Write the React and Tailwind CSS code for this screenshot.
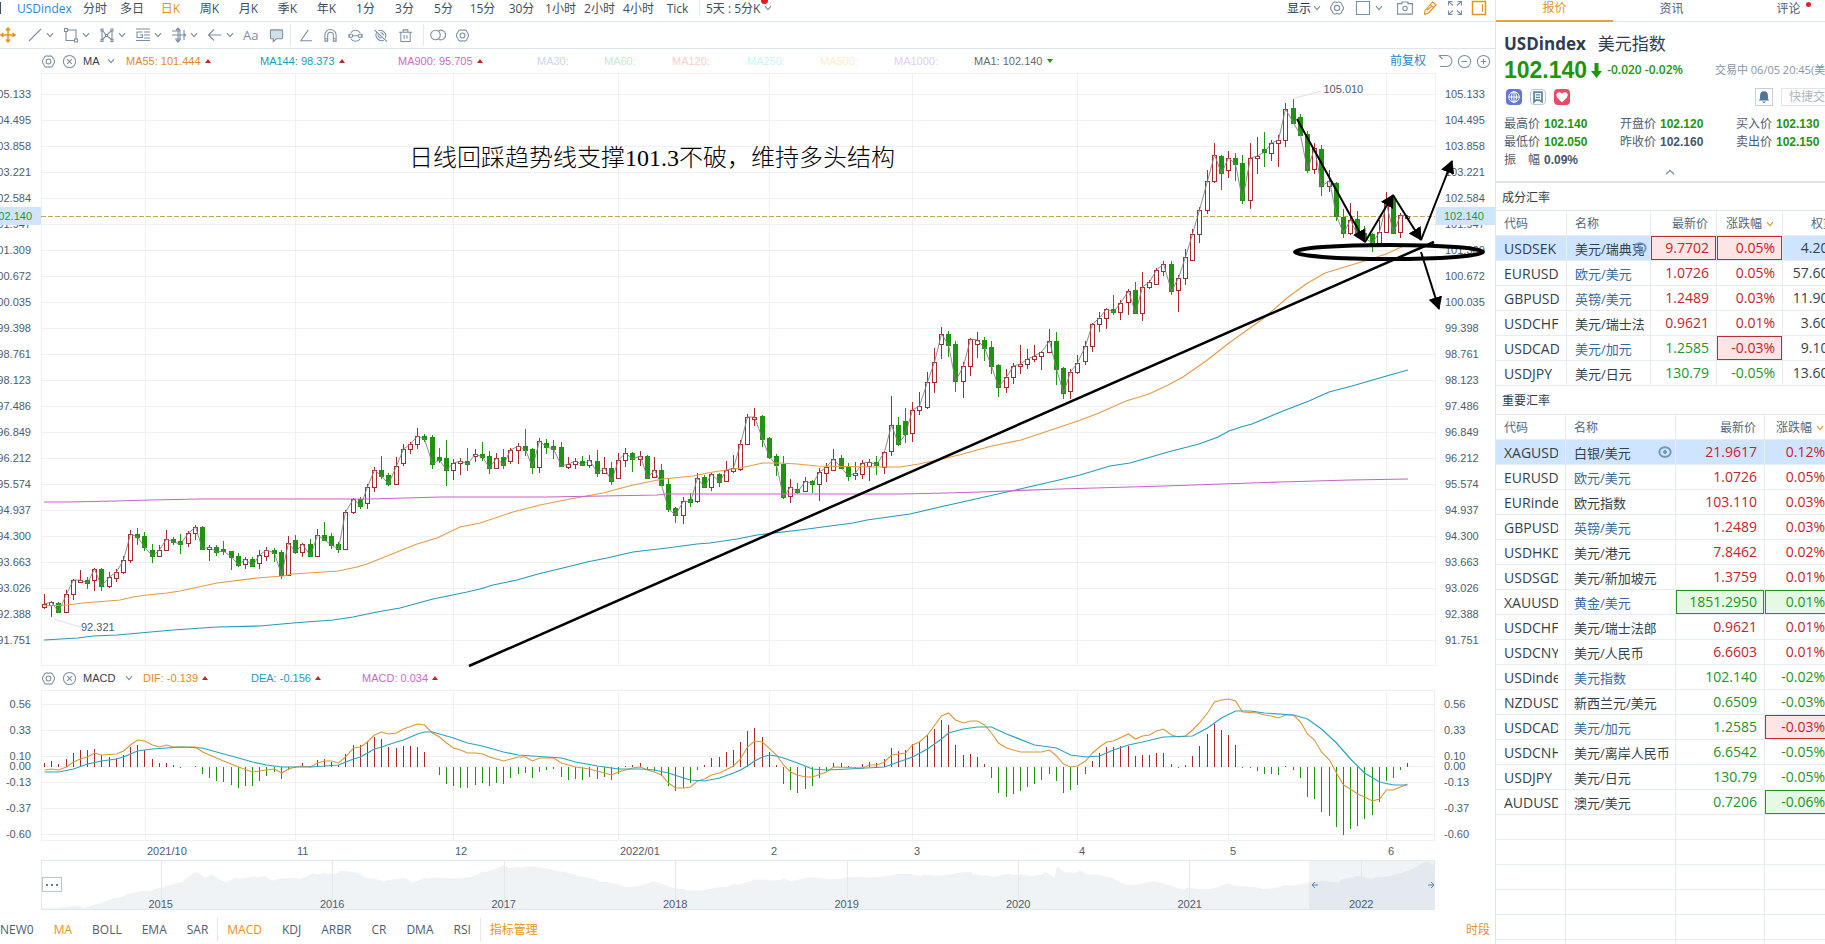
import React from 'react';

// [rising, high, body top, body bottom, low]
const candles = [
  [1, 594, 604, 607, 609], [1, 601, 602, 605, 617], [0, 602, 603, 612, 613], [1, 590, 594, 612, 612], [1, 579, 580, 594, 600],
  [1, 570, 580, 582, 583], [0, 577, 580, 583, 589], [1, 568, 569, 580, 591], [0, 568, 569, 586, 591], [1, 572, 577, 586, 588],
  [1, 569, 572, 578, 582], [1, 556, 560, 572, 574], [1, 530, 534, 560, 563], [0, 528, 534, 537, 545], [0, 532, 536, 547, 551],
  [0, 544, 550, 556, 563], [1, 545, 550, 556, 557], [1, 530, 539, 550, 550], [0, 537, 539, 542, 545], [0, 534, 541, 544, 554],
  [1, 531, 533, 543, 547], [1, 525, 527, 533, 540], [0, 526, 527, 549, 550], [1, 545, 547, 549, 561], [0, 545, 547, 552, 556],
  [0, 541, 549, 551, 555], [0, 551, 551, 557, 570], [0, 553, 556, 565, 567], [1, 557, 559, 564, 569], [0, 557, 559, 566, 567],
  [1, 550, 555, 563, 569], [1, 547, 550, 556, 561], [0, 548, 550, 553, 562], [0, 550, 552, 575, 579], [1, 536, 543, 575, 576],
  [0, 535, 540, 552, 554], [1, 543, 544, 552, 557], [0, 539, 544, 556, 556], [1, 529, 535, 556, 556], [0, 522, 535, 540, 541],
  [0, 533, 536, 545, 549], [0, 542, 544, 549, 553], [1, 510, 512, 549, 550], [1, 498, 499, 512, 514], [0, 497, 499, 506, 509],
  [1, 484, 487, 503, 509], [1, 467, 470, 487, 492], [0, 456, 470, 476, 479], [0, 473, 475, 484, 486], [1, 457, 466, 484, 484],
  [1, 444, 449, 463, 466], [1, 442, 444, 449, 454], [1, 428, 436, 444, 449], [0, 434, 436, 439, 442], [0, 435, 437, 464, 469],
  [0, 448, 457, 460, 463], [0, 440, 458, 470, 486], [1, 459, 463, 470, 480], [1, 458, 461, 463, 475], [0, 448, 461, 464, 471],
  [1, 449, 454, 456, 462], [0, 442, 454, 457, 461], [0, 451, 456, 468, 474], [1, 453, 458, 468, 469], [0, 449, 457, 465, 469],
  [1, 448, 450, 461, 464], [1, 443, 446, 450, 464], [0, 429, 446, 450, 456], [0, 448, 449, 467, 474], [1, 438, 441, 467, 473],
  [0, 439, 443, 447, 454], [0, 440, 446, 449, 459], [0, 442, 447, 466, 467], [1, 457, 464, 467, 469], [1, 458, 461, 464, 469],
  [0, 456, 461, 465, 466], [1, 455, 460, 465, 468], [0, 450, 461, 473, 477], [1, 457, 468, 473, 474], [0, 462, 468, 481, 485],
  [1, 453, 460, 478, 479], [1, 448, 453, 460, 467], [0, 452, 453, 459, 472], [1, 451, 456, 459, 466], [0, 455, 456, 478, 479],
  [1, 457, 470, 477, 478], [0, 464, 470, 485, 486], [0, 478, 484, 509, 512], [0, 507, 508, 515, 523], [1, 497, 501, 515, 524],
  [0, 493, 499, 502, 507], [1, 473, 478, 501, 503], [0, 475, 477, 487, 488], [1, 473, 474, 487, 491], [0, 473, 474, 482, 487],
  [1, 461, 470, 481, 482], [1, 455, 468, 471, 473], [1, 440, 444, 469, 471], [1, 414, 417, 444, 445], [1, 408, 417, 419, 426],
  [0, 415, 416, 439, 447], [0, 437, 438, 457, 459], [0, 454, 456, 465, 476], [0, 456, 464, 497, 499], [1, 479, 487, 496, 503],
  [0, 483, 489, 492, 494], [1, 477, 481, 491, 491], [0, 480, 481, 484, 493], [1, 468, 472, 484, 501], [1, 463, 467, 473, 482],
  [1, 449, 459, 470, 471], [0, 455, 458, 468, 469], [0, 463, 467, 476, 481], [1, 462, 473, 475, 480], [1, 460, 463, 474, 479],
  [1, 459, 462, 466, 481], [0, 456, 462, 465, 475], [1, 451, 452, 467, 474], [1, 396, 425, 451, 456], [0, 417, 425, 444, 446],
  [0, 408, 421, 434, 443], [1, 402, 410, 433, 442], [1, 392, 406, 410, 415], [1, 372, 382, 407, 409], [1, 348, 362, 382, 393],
  [1, 327, 334, 344, 359], [0, 331, 334, 345, 357], [0, 341, 344, 381, 392], [1, 362, 366, 381, 398], [1, 338, 339, 366, 376],
  [1, 332, 340, 344, 358], [0, 337, 340, 348, 361], [0, 341, 347, 366, 374], [0, 364, 365, 387, 397], [1, 369, 377, 387, 393],
  [1, 363, 366, 377, 384], [1, 345, 364, 366, 374], [1, 349, 359, 364, 369], [1, 345, 356, 359, 362], [1, 351, 352, 356, 370],
  [1, 329, 341, 352, 353], [0, 332, 341, 369, 385], [0, 367, 368, 393, 399], [1, 369, 372, 391, 399], [1, 355, 363, 372, 374],
  [1, 341, 346, 361, 365], [1, 323, 324, 346, 352], [1, 312, 318, 324, 332], [1, 308, 309, 318, 329], [0, 295, 309, 312, 315],
  [1, 300, 303, 312, 320], [1, 289, 291, 302, 315], [0, 282, 290, 313, 314], [1, 272, 287, 313, 321], [1, 280, 282, 287, 289],
  [1, 268, 270, 284, 285], [1, 261, 264, 271, 276], [0, 261, 264, 291, 295], [1, 275, 278, 290, 312], [1, 249, 257, 278, 285],
  [1, 229, 234, 260, 261], [1, 207, 210, 234, 243], [1, 170, 181, 210, 214], [1, 143, 155, 181, 183], [0, 155, 156, 173, 190],
  [1, 151, 158, 170, 178], [0, 153, 158, 164, 181], [0, 155, 163, 200, 204], [1, 143, 158, 200, 209], [1, 137, 156, 158, 174],
  [0, 132, 149, 152, 167], [1, 140, 143, 153, 161], [1, 135, 140, 143, 167], [1, 103, 109, 140, 147], [0, 99, 108, 123, 124],
  [0, 114, 117, 135, 136], [0, 131, 134, 170, 173], [1, 143, 148, 169, 174], [0, 145, 149, 186, 196], [1, 170, 181, 186, 192],
  [0, 182, 183, 216, 221], [0, 209, 217, 233, 238], [1, 203, 220, 233, 235], [0, 211, 219, 235, 238], [0, 226, 233, 238, 242],
  [0, 233, 234, 243, 252], [1, 220, 232, 243, 246], [1, 192, 204, 232, 233], [0, 195, 199, 233, 234], [1, 213, 215, 232, 238],
  [1, 215, 216, 218, 219],
];

const ma55 = '44,606 67,605 83,603 120,600 133,597 147,595 167,593 180,591 217,583 257,578 283,576 293,574 338,571 357,567 367,564 387,556 417,544 437,538 460,527 480,523 513,512 540,505 570,499 603,493 633,485 663,479 693,476 713,472 740,468 763,463 780,463 797,464 817,466 873,467 900,467 919,464 942,459 963,454 977,450 992,446 1021,440 1051,430 1078,421 1099,413 1126,401 1149,394 1168,385 1183,377 1206,361 1229,343 1264,318 1287,298 1306,284 1325,273 1348,266 1371,259 1386,254 1408,244';
const ma144 = '44,640 78,638 93,636 117,635 173,630 217,627 260,626 293,623 333,620 353,617 377,612 400,608 433,599 467,592 480,589 493,585 517,580 538,574 567,567 587,562 607,558 633,552 667,548 697,544 710,543 737,539 757,535 800,530 853,523 867,520 910,514 940,507 980,498 1020,489 1059,480 1080,475 1110,466 1130,463 1168,452 1199,444 1218,437 1229,431 1241,427 1252,424 1283,411 1309,401 1329,392 1352,386 1390,375 1408,370';
const ma900 = '44,502 70,502 115,501 150,500 200,499 370,499 440,497 547,497 657,495 667,494 900,494 947,493 980,492 1060,489 1164,486 1280,482 1350,480 1408,479';

const histogram = [
  4, 6, 3, 8, 14, 17, 17, 18, 12, 10, 9, 12, 20, 22, 17, 8, 4, 4, 2, -1, 0, 1, -7, -11, -14, -15, -18, -21, -19, -19, -14, -9, -5, -12, -3,
  -1, 4, 1, 7, 8, 5, 2, 13, 22, 22, 26, 30, 28, 20, 19, 21, 21, 20, 15, 0, -8, -17, -19, -21, -21, -18, -16, -19, -16, -17, -11, -7, -6,
  -11, -5, -3, -2, -10, -13, -12, -13, -10, -12, -10, -13, -7, 1, 2, 4, -3, -4, -9, -19, -24, -21, -16, -3, 2, 9, 10, 15, 17, 25, 36, 39,
  30, 15, 2, -17, -23, -26, -22, -19, -11, -4, 4, 4, 1, -1, 3, 5, 4, 8, 19, 16, 17, 23, 25, 32, 38, 47, 42, 22, 12, 13, 10, 3, -11, -26,
  -30, -27, -24, -20, -17, -13, -7, -14, -26, -23, -18, -7, 6, 14, 20, 20, 21, 21, 11, 12, 12, 14, 14, 3, -1, 2, 11, 21, 33, 43, 37, 32,
  22, -1, -1, -4, -7, -7, -8, 1, -3, -11, -30, -32, -45, -49, -60, -68, -62, -59, -52, -48, -35, -14, -11, -3, 4,
];

// index,y pairs
const dif = '0,80 1,79 2,80 3,77 4,72 5,69 6,67 7,63 8,65 10,64 11,61 12,55 13,50 14,51 15,55 16,57 17,55 18,57 21,57 22,62 24,68 25,71 27,77 29,82 31,80 32,79 33,83 34,79 35,77 36,76 37,77 38,73 39,71 40,71 41,73 42,67 43,58 44,57 45,52 46,45 47,42 48,44 49,43 50,39 52,34 53,35 54,43 55,47 56,53 57,58 58,60 59,63 60,63 61,64 62,67 64,71 66,67 67,67 68,71 69,68 71,68 72,73 74,77 76,79 78,83 79,85 80,82 81,80 82,78 83,77 84,80 85,82 86,85 87,93 88,98 89,98 90,97 91,91 92,89 93,85 94,83 96,76 97,69 98,57 99,51 100,52 102,65 103,75 104,82 105,85 106,87 107,87 109,82 110,77 114,78 115,75 116,75 117,72 118,65 120,63 121,55 122,52 123,45 125,26 126,23 127,30 128,33 129,31 130,31 131,35 132,43 133,53 134,58 136,62 139,62 140,60 141,66 142,74 143,77 144,76 145,71 146,63 147,57 148,52 149,51 151,44 152,49 153,46 154,45 155,41 156,39 157,45 158,47 159,46 160,40 161,33 162,23 163,12 164,10 165,9 166,11 167,22 169,23 170,25 171,26 172,28 173,25 174,25 175,32 176,44 177,50 178,62 179,70 180,83 181,95 182,99 183,104 184,107 185,111 186,109 187,100 188,100 189,97 190,94';
const dea = '0,82 2,82 4,79 6,74 8,71 10,69 11,67 13,61 15,59 19,57 22,58 24,62 27,68 29,72 31,75 33,77 37,77 39,76 41,75 43,69 44,67 46,59 47,57 49,52 50,50 52,44 53,42 54,42 55,44 57,48 59,53 61,56 64,62 66,65 68,66 72,68 74,72 77,76 80,79 83,79 85,80 87,83 89,88 90,90 92,91 94,88 96,83 97,80 98,76 99,71 100,67 101,65 102,66 103,68 105,73 107,79 109,80 112,79 117,77 119,72 121,67 123,59 125,49 126,43 128,39 130,37 132,37 134,44 138,55 141,58 143,65 145,67 147,66 149,60 151,55 153,52 156,47 160,46 162,38 164,28 166,21 168,21 170,23 174,25 176,29 178,39 180,53 182,69 184,83 186,92 188,95 190,95';

const history = [
  [0, 48], [12, 47], [41, 47], [56, 43], [75, 37], [95, 33], [114, 30], [134, 22], [143, 21], [154, 13], [163, 17], [170, 14], [187, 22],
  [197, 18], [216, 17], [226, 17], [235, 20], [260, 18], [274, 13], [281, 13], [298, 12], [318, 13], [327, 18], [342, 22], [361, 19],
  [371, 22], [386, 18], [410, 19], [434, 15], [444, 11], [461, 6], [468, 9], [483, 8], [497, 7], [516, 12], [541, 16], [560, 22],
  [584, 27], [613, 22], [647, 30], [686, 28], [696, 24], [719, 20], [728, 21], [743, 18], [752, 21], [772, 18], [820, 18], [844, 15],
  [883, 15], [932, 13], [951, 16], [970, 14], [990, 17], [1004, 13], [1013, 18], [1016, 7], [1024, 12], [1038, 11], [1048, 15],
  [1072, 18], [1087, 24], [1111, 22], [1145, 29], [1169, 28], [1191, 24], [1223, 30], [1242, 25], [1266, 23], [1300, 21], [1315, 17],
  [1334, 18], [1353, 14], [1373, 8], [1385, 3], [1394, 6],
];

const candleX = i => Math.round(44 + i * 7.176) + 0.5;
const indexed = points => points.split(' ').map(p => {
  const [i, y] = p.split(',');
  return `${candleX(Number(i))},${y}`;
}).join(' ');
const closes = candles.map(([up, , top, bottom], i) => `${candleX(i)},${up ? top : bottom}`).join(' ');

const monthLines = [145, 295, 453, 618, 769, 912, 1077, 1228, 1386];
const months = [['2021/10', 150], ['11', 158], ['12', 165], ['2022/01', 151], ['2', 143], ['3', 165], ['4', 151], ['5', 158], ['6', 49]];
const prices = ['105.133', '104.495', '103.858', '103.221', '102.584', '101.947', '101.309', '100.672', '100.035', '99.398', '98.761', '98.123', '97.486', '96.849', '96.212', '95.574', '94.937', '94.300', '93.663', '93.026', '92.388', '91.751'];
const macdTicks = [['0.56', 10], ['0.33', 42], ['0.10', 10], ['0.00', 10], ['-0.13', 22], ['-0.37', 30], ['-0.60', 22]];
const years = ['2015', '2016', '2017', '2018', '2019', '2020', '2021', '2022'];

const periods = ['日K', '周K', '月K', '季K', '年K', '1分', '3分', '5分', '15分', '30分', '1小时', '2小时', '4小时', 'Tick'];

const maItems = [
  { text: 'MA55: 101.444', cls: 'w-[134px] text-[#e08a2a]', mark: 'up' },
  { text: 'MA144: 98.373', cls: 'w-[138px] text-[#1a9cb8]', mark: 'up' },
  { text: 'MA900: 95.705', cls: 'w-[139px] text-[#cf68cc]', mark: 'up' },
  { text: 'MA30:', cls: 'w-[67px] text-[#c9d6ea]' },
  { text: 'MA60:', cls: 'w-[68px] text-[#c8e9cf]' },
  { text: 'MA120:', cls: 'w-[75px] text-[#f7cfcb]' },
  { text: 'MA250:', cls: 'w-[73px] text-[#c9f3f3]' },
  { text: 'MA500:', cls: 'w-[74px] text-[#fbecc6]' },
  { text: 'MA1000:', cls: 'w-[80px] text-[#e0cdf0]' },
  { text: 'MA1: 102.140', cls: 'text-[#6b6b6b]', mark: 'down' },
];

const macdItems = [
  { text: 'DIF: -0.139', cls: 'w-[108px] text-[#e08a2a]', mark: 'up' },
  { text: 'DEA: -0.156', cls: 'w-[111px] text-[#1a9cb8]', mark: 'up' },
  { text: 'MACD: 0.034', cls: 'text-[#cf68cc]', mark: 'up' },
];

const components = [
  { code: 'USDSEK', name: '美元/瑞典克', price: '9.7702', pct: '0.05%', weight: '4.20%', up: true, active: true, eye: true, priceBox: 'red', pctBox: 'red' },
  { code: 'EURUSD', name: '欧元/美元', price: '1.0726', pct: '0.05%', weight: '57.60%', up: true, link: true },
  { code: 'GBPUSD', name: '英镑/美元', price: '1.2489', pct: '0.03%', weight: '11.90%', up: true, link: true },
  { code: 'USDCHF', name: '美元/瑞士法郎', price: '0.9621', pct: '0.01%', weight: '3.60%', up: true },
  { code: 'USDCAD', name: '美元/加元', price: '1.2585', pct: '-0.03%', weight: '9.10%', link: true, pctBox: 'red' },
  { code: 'USDJPY', name: '美元/日元', price: '130.79', pct: '-0.05%', weight: '13.60%' },
];

const majors = [
  { code: 'XAGUSD', name: '白银/美元', price: '21.9617', pct: '0.12%', up: true, active: true, eye: true },
  { code: 'EURUSD', name: '欧元/美元', price: '1.0726', pct: '0.05%', up: true, link: true },
  { code: 'EURindex', name: '欧元指数', price: '103.110', pct: '0.03%', up: true },
  { code: 'GBPUSD', name: '英镑/美元', price: '1.2489', pct: '0.03%', up: true, link: true },
  { code: 'USDHKD', name: '美元/港元', price: '7.8462', pct: '0.02%', up: true },
  { code: 'USDSGD', name: '美元/新加坡元', price: '1.3759', pct: '0.01%', up: true },
  { code: 'XAUUSD', name: '黄金/美元', price: '1851.2950', pct: '0.01%', link: true, priceBox: 'green', pctBox: 'green' },
  { code: 'USDCHF', name: '美元/瑞士法郎', price: '0.9621', pct: '0.01%', up: true },
  { code: 'USDCNY', name: '美元/人民币', price: '6.6603', pct: '0.01%', up: true },
  { code: 'USDindex', name: '美元指数', price: '102.140', pct: '-0.02%', link: true },
  { code: 'NZDUSD', name: '新西兰元/美元', price: '0.6509', pct: '-0.03%' },
  { code: 'USDCAD', name: '美元/加元', price: '1.2585', pct: '-0.03%', link: true, pctBox: 'red' },
  { code: 'USDCNH', name: '美元/离岸人民币', price: '6.6542', pct: '-0.05%' },
  { code: 'USDJPY', name: '美元/日元', price: '130.79', pct: '-0.05%' },
  { code: 'AUDUSD', name: '澳元/美元', price: '0.7206', pct: '-0.06%', pctBox: 'green' },
];

const Icon = ({ children, className = 'w-4 h-4' }) => (
  <svg viewBox="0 0 16 16" className={`shrink-0 ${className}`} fill="none" stroke="currentColor" strokeWidth="1.1">
    {children}
  </svg>
);

const Chevron = ({ className = '' }) => (
  <svg viewBox="0 0 8 6" className={`w-2 h-1.5 shrink-0 ${className}`} fill="none" stroke="currentColor" strokeWidth="1.1">
    <path d="M1 1.2 4 4.6 7 1.2" />
  </svg>
);

const Gear = ({ className }) => (
  <Icon className={className}>
    <path d="M13.100 5.050Q15.900 8 13.100 10.950 12.100 15.100 8 13.600 3.900 15.100 2.900 10.950.1 8 2.900 5.050 3.900.9 8 2.400 12.100.9 13.100 5.050z" strokeLinejoin="round" />
    <circle cx="8" cy="8" r="2.600" />
  </Icon>
);

const CircleX = () => (
  <Icon className="w-[15px] h-[15px]">
    <circle cx="8" cy="8" r="6.5" />
    <path d="m5.5 5.5 5 5m0-5-5 5" />
  </Icon>
);

const Mark = ({ dir }) => (
  <svg viewBox="0 0 6 4" className="w-1.5 h-1 shrink-0">
    {dir === 'up' ? <path d="M0 4 3 0l3 4z" fill="#c5221f" /> : <path d="M0 0h6L3 4z" fill="#1f9410" />}
  </svg>
);

const Eye = () => (
  <Icon className="w-3.5 h-3.5 text-[#7196bb]">
    <ellipse cx="8" cy="8" rx="6.500" ry="5.500" strokeWidth="2.200" />
    <circle cx="8" cy="8" r="1.800" fill="currentColor" />
  </Icon>
);

const drawTools = [
  <path d="M2 14 14 2" />,
  <g><path d="M3 3h10v10.500H3z" /><path d="M1.500 1.500h3v3h-3zM11.500 12h3v3h-3z" fill="white" /></g>,
  <g>
    <path d="M3 13V3l4.500 5.500L13 3v10L7.500 8.500 3 13" />
    <path d="M2 2h2v2H2zM12 2h2v2h-2zM2 12.500h2v2H2zM12 12.500h2v2h-2zM6.500 7.500h2v2h-2z" fill="white" />
  </g>,
  <path d="M1 2h14M9 5h6M7.500 5H2v5.500h5.500V8H5M9 8h6M9 11h6M1 13.500h14" />,
  <path d="M7 1v14M1 8h14M1 4h8m4-1v10M9 3v10M12.500 6l2 2-2 2M5 3l2-2 2 2m-4 10 2 2 2-2M4 12h6" />,
  <path d="M14.500 8H2m5-5.500L1.500 8 7 13.500" />,
];

const plainTools = [
  ['角度', <path d="M11 2 3 13.500h12" />],
  ['磁吸', <path d="M2 14V7.500a6 6 0 0 1 12 0V14h-3V7.500a3 3 0 0 0-6 0V14zM2 11.500h3m6 0h3" />],
  ['锁定', <g><path d="M3 5a6 6 0 0 1 10 0M3 11.500a6 6 0 0 0 10 0M1 6v4.500M15 6v4.500M5 8.200h6" /><circle cx="3.200" cy="8.200" r="1.800" /><circle cx="12.800" cy="8.200" r="1.800" /></g>],
  ['隐藏', <g><path d="M4 4.500a6 6 0 0 0 7.500 8.500M5.500 2.800a6 6 0 0 1 7.500 8.200M1.500 2 15 14.500M5.500 7a3 3 0 0 0 3.500 3.500M8 5a3 3 0 0 1 3 3" /></g>],
  ['删除', <path d="M1 4.500h14M5.500 4V2h5v2M3 4.500v10h10v-10M6.500 7.500v4m3-4v4" />],
];

const TopBar = () => (
  <div className="h-[22px] pb-[5px] flex items-center border-b border-[#dfe5e8] text-xs leading-[15px] text-[#3d4d5e]">
    <span className="w-[17px] h-3 border-l border-[#3d4d5e]" />
    <button className="w-[60px] text-left text-[#2d87cf]">USDindex</button>
    <button className="w-9">分时</button>
    <button className="w-[38px]">多日</button>
    {periods.map(p => (
      <button key={p} className={`w-[39px] whitespace-nowrap ${p === '日K' ? 'text-[#e8921a]' : ''}`}>{p}</button>
    ))}
    <span className="ml-0.5 h-4 border-l border-[#e3e8ec]" />
    <button className="ml-[6px] relative flex items-center gap-1 whitespace-nowrap">
      5天 : 5分K
      <Chevron className="text-[#7a8ea3]" />
      <span className="absolute right-1 -top-1 w-[7px] h-[7px] rounded-full bg-[#e01b22]" />
    </button>
    <div className="ml-auto pr-2 flex items-center text-[#7a8ea3]">
      <button className="flex items-center gap-0.5 text-[#2b3846]">显示<Chevron className="text-[#7a8ea3]" /></button>
      <button className="ml-2" aria-label="设置"><Gear /></button>
      <button className="ml-[10px] flex items-center gap-1" aria-label="布局">
        <Icon><path d="M1.500 1.500h13v13h-13z" /></Icon>
        <Chevron />
      </button>
      <button className="ml-[14px]" aria-label="截图">
        <Icon><path d="M.6 3.600H5V2h6v1.600h4.400v10.500H.6z" /><circle cx="8" cy="8.500" r="2.200" /></Icon>
      </button>
      <button className="ml-[9px] text-[#e8921a]" aria-label="画线">
        <Icon><path d="M10.500 2 14 5 6.500 13l-4 1.500.5-4zM8 4.500 11.500 7.500M5 10l5-4" strokeLinejoin="round" /></Icon>
      </button>
      <button className="ml-[9px]" aria-label="全屏">
        <Icon><path d="M1.500 5.500v-4h4M1.500 1.500l4.500 4M10.500 1.500h4v4m0-4-4.500 4M1.500 10.500v4h4m-4 0 4.500-4M14.500 10.500v4h-4m4 0-4.500-4" /></Icon>
      </button>
      <button className="ml-2 text-[#dd9a1c]" aria-label="侧栏">
        <Icon><path d="M1.500 1.500h13v13h-13z" strokeWidth="1.500" /><path d="M11.500 4v8" /></Icon>
      </button>
    </div>
  </div>
);

const DrawBar = () => (
  <div className="h-[27px] flex items-center border-b border-[#dfe5e8] text-[#7a8ea3]">
    <button className="w-[27px]  text-[#e8921a]" aria-label="移动">
      <Icon><path d="M8 1.500v13M1.500 8h13M6 3.500l2-2.500 2 2.500m-4 9L8 15l2-2.500M3.500 6 1 8l2.500 2m9-4L15 8l-2.500 2" strokeWidth="1.500" /></Icon>
    </button>
    {drawTools.map((shape, i) => (
      <button key={i} className="w-9 flex items-center gap-[3px]" aria-label={`画线工具${i + 1}`}>
        <Icon>{shape}</Icon>
        <Chevron />
      </button>
    ))}
    <button className="w-[26px] text-[13px] leading-4 text-left">Aa</button>
    <button className="w-[21px]" aria-label="批注">
      <Icon className="w-[15px] h-[15px]"><path d="M2.500 2h11q1 0 1 1v7.500q0 1-1 1H8l-3.500 3v-3h-2q-1 0-1-1V3q0-1 1-1z" fill="#d3dfe8" /></Icon>
    </button>
    <span className="h-[22px] border-l border-[#e3e8ec] mr-[7px]" />
    {plainTools.map(([label, shape]) => (
      <button key={label} className="w-[25px]" aria-label={label}>
        <Icon className="w-[15px] h-[15px]">{shape}</Icon>
      </button>
    ))}
    <span className="h-[22px] border-l border-[#e3e8ec] mr-[6px]" />
    <button className="w-[25px]" aria-label="叠加">
      <Icon><circle cx="5.500" cy="8" r="4.800" /><path d="M8.500 3.800a4.800 4.800 0 1 1 0 8.400" /></Icon>
    </button>
    <button aria-label="设置"><Gear className="w-[15px] h-[15px]" /></button>
  </div>
);

const IndicatorRow = ({ name, items, nameWidth, children }) => (
  <div className="h-6 pl-[41px] flex items-center font-['Liberation_Sans','Noto_Sans_CJK_SC',sans-serif] text-[11px] text-[#7a8ea3]">
    <button aria-label="设置"><Gear className="w-[15px] h-[15px]" /></button>
    <button className="ml-[6px]" aria-label="关闭"><CircleX /></button>
    <button className={`ml-[6px] flex items-center justify-between text-[#333f4b] ${nameWidth}`}>
      {name}
      <Chevron className="text-[#7a8ea3]" />
    </button>
    {items.map(item => (
      <span key={item.text} className={`flex items-center gap-1 whitespace-nowrap ${item.cls}`}>
        {item.text}
        {item.mark && <Mark dir={item.mark} />}
      </span>
    ))}
    {children}
  </div>
);

const axisFont = "font-['Liberation_Sans',sans-serif] text-[11px] text-[#4d5d6d]";

const PriceAxis = ({ side }) => (
  <div className={`relative pt-2 ${axisFont} ${side === 'left' ? 'w-[41px]' : 'w-[60px]'}`}>
    {prices.map(p => (
      <div key={p} className={`h-[26px] flex items-center ${side === 'left' ? 'justify-end pr-[10px]' : 'pl-[10px]'}`}>{p}</div>
    ))}
    <div className={`absolute inset-x-0 top-[134px] h-[18px] flex items-center bg-[#d0e5fb] text-[#1f9a2a] ${side === 'left' ? 'justify-end pr-[9px]' : 'pl-[9px]'}`}>
      102.140
    </div>
  </div>
);

const MacdAxis = ({ side }) => (
  <div className={`pt-[9px] ${axisFont} ${side === 'left' ? 'w-[41px]' : 'w-[60px]'}`}>
    {macdTicks.map(([t, h]) => (
      <div key={t} style={{ height: h }} className={`flex items-center ${side === 'left' ? 'justify-end pr-[10px]' : 'pl-[9px]'}`}>{t}</div>
    ))}
  </div>
);

const Arrow = ({ points }) => (
  <polyline points={points} fill="none" stroke="black" strokeWidth="2" markerEnd="url(#head)" />
);

const PriceChart = () => (
  <div className="flex h-[593px]">
    <PriceAxis side="left" />
    <div className="relative z-10 flex-1 min-w-0">
      <svg viewBox="41 73 1394 593" preserveAspectRatio="none" className="w-full h-full overflow-visible">
        <defs>
          <marker id="head" markerUnits="userSpaceOnUse" markerWidth="16" markerHeight="16" refX="12" refY="8" orient="auto">
            <path d="M0 1 13 8 0 15z" />
          </marker>
        </defs>
        <g stroke="#edf1f3" shapeRendering="crispEdges">
          {prices.map((p, i) => <line key={p} x1="41" x2="1435" y1={94.5 + i * 26} y2={94.5 + i * 26} />)}
          {monthLines.map(x => <line key={x} x1={x + 0.5} x2={x + 0.5} y1="73" y2="666" />)}
          <rect x="41.5" y="73.5" width="1394" height="592" fill="none" />
        </g>
        <path d="m54 619 26 8m1215-529 26-7" stroke="#e8d9dd" />
        <line x1="41" x2="1435" y1="216.5" y2="216.5" stroke="#c7a452" strokeDasharray="5 2" />
        <g shapeRendering="crispEdges">
          {candles.map(([up, high, top, bottom, low], i) => {
            const x = candleX(i);
            return up ? (
              <g key={i} stroke="#a82a2e" fill="white">
                <path d={`M${x} ${high}V${low}`} />
                <rect x={x - 2} y={top + 0.5} width="4" height={Math.max(bottom - top, 1)} />
              </g>
            ) : (
              <g key={i} stroke="#1f9410" fill="#1f9410">
                <path d={`M${x} ${high}V${low}`} />
                <rect x={x - 2} y={top + 0.5} width="4" height={Math.max(bottom - top, 1)} />
              </g>
            );
          })}
        </g>
        <polyline points={closes} fill="none" stroke="#808080" strokeWidth="0.9" />
        <polyline points={ma55} fill="none" stroke="#e69a45" strokeWidth="1.100" />
        <polyline points={ma144} fill="none" stroke="#2599bd" strokeWidth="1.100" />
        <polyline points={ma900} fill="none" stroke="#c565c4" strokeWidth="1.100" />
        <path d="M469 666 1434 242" stroke="black" strokeWidth="2.500" />
        <ellipse cx="1389" cy="252" rx="94" ry="7" fill="none" stroke="black" strokeWidth="4" />
        <Arrow points="1297,119 1365,242" />
        <Arrow points="1365,242 1393,195" />
        <Arrow points="1393,195 1421,240" />
        <Arrow points="1421,240 1452,161" />
        <Arrow points="1421,252 1439,309" />
      </svg>
      <p className="absolute left-[26.400%] top-[67px] whitespace-nowrap text-2xl leading-9 font-light text-black font-['Liberation_Serif','Noto_Sans_CJK_SC',serif]">
        日线回踩趋势线支撑101.3不破，维持多头结构
      </p>
      <span className={`absolute left-[92%] top-2 leading-4 ${axisFont}`}>105.010</span>
      <span className={`absolute left-[40px] bottom-[31px] leading-4 ${axisFont}`}>92.321</span>
    </div>
    <PriceAxis side="right" />
  </div>
);

const MacdChart = () => (
  <div className="flex h-[151px]">
    <MacdAxis side="left" />
    <div className="flex-1 min-w-0">
      <svg viewBox="41 0 1394 151" preserveAspectRatio="none" className="w-full h-full">
        <g stroke="#edf1f3" shapeRendering="crispEdges">
          {[14, 40, 66, 76, 92, 118, 144].map(y => <line key={y} x1="41" x2="1435" y1={y + 0.5} y2={y + 0.5} />)}
          {monthLines.map(x => <line key={x} x1={x + 0.5} x2={x + 0.5} y1="0" y2="151" />)}
          <rect x="41.500" y="0.500" width="1393" height="150" fill="none" />
        </g>
        <g shapeRendering="crispEdges">
          {histogram.map((h, i) => h !== 0 && (
            <line key={i} x1={candleX(i)} x2={candleX(i)} y1="77" y2={77 - h} stroke={h > 0 ? '#a82a2e' : '#1f9410'} />
          ))}
        </g>
        <polyline points={indexed(dif)} fill="none" stroke="#dd9638" strokeWidth="1.100" />
        <polyline points={indexed(dea)} fill="none" stroke="#2aa3bf" strokeWidth="1.200" />
      </svg>
    </div>
    <MacdAxis side="right" />
  </div>
);

// Fill in a little texture between the coarse history points
const ridge = [];
history.slice(1).forEach(([x2, y2], i) => {
  const [x1, y1] = history[i];
  for (let x = x1; x < x2; x += 4) {
    const y = y1 + ((y2 - y1) * (x - x1)) / (x2 - x1);
    ridge.push(`${x},${Math.min(48, y + Math.sin(x * 1.7) * 1.2).toFixed(1)}`);
  }
});

const Overview = () => (
  <div className="relative ml-[41px] mr-[60px] h-[50px]">
    <svg viewBox="0 0 1394 50" preserveAspectRatio="none" className="w-full h-full">
      <polygon points={`0,49 ${ridge.join(' ')} 1394,6 1394,49`} fill="#eff3f6" />
      <rect x="1268" y="0" width="126" height="49" fill="#8fa3b3" opacity="0.120" />
      <g stroke="#e3e8ec" fill="none" shapeRendering="crispEdges">
        {years.map((y, i) => <line key={y} x1={120.5 + i * 171.4} x2={120.5 + i * 171.4} y1="0" y2="49" />)}
        <rect x="0.500" y="0.500" width="1393" height="49" />
      </g>
      <path d="M1277 25h-6m3-3-3 3 3 3M1387 25h6m-3-3 3 3-3 3" stroke="#5c82a8" fill="none" />
    </svg>
    <div className="absolute left-[34px] right-[-12px] bottom-0 flex text-center font-['Liberation_Sans',sans-serif] text-[11px] leading-[12px] text-[#4d5d6d]">
      {years.map(y => <span key={y} className="flex-1">{y}</span>)}
    </div>
    <button className="absolute left-px top-[17px] w-5 h-[15px] border border-[#b9c6d1] bg-white flex items-center justify-center gap-[3px]" aria-label="更多">
      <i className="w-0.5 h-0.5 bg-[#5f7d99]" />
      <i className="w-0.5 h-0.5 bg-[#5f7d99]" />
      <i className="w-0.5 h-0.5 bg-[#5f7d99]" />
    </button>
  </div>
);

const BottomTabs = () => (
  <div className="h-[34px] pt-[5px] pr-[5px] flex items-center gap-5 text-xs text-[#4d5d6d]">
    <button>NEW0</button>
    <button className="text-[#e8921a]">MA</button>
    <button>BOLL</button>
    <button>EMA</button>
    <button>SAR</button>
    <span className="-mx-[11px] h-6 border-l border-[#e3e8ec]" />
    <button className="text-[#e8921a]">MACD</button>
    <button>KDJ</button>
    <button>ARBR</button>
    <button>CR</button>
    <button>DMA</button>
    <button>RSI</button>
    <span className="-mx-[11px] h-6 border-l border-[#e3e8ec]" />
    <button className="text-[#e8921a]">指标管理</button>
    <button className="ml-auto text-[#e8921a]">时段</button>
  </div>
);

const Stat = ({ label, value, dark }) => (
  <div className="w-[116px] shrink-0 flex items-center gap-1 whitespace-nowrap">
    <span>{label}</span>
    <b className={`font-['Liberation_Sans',sans-serif] ${dark ? 'text-[#44566a]' : 'text-[#1f9410]'}`}>{value}</b>
  </div>
);

const boxes = {
  red: 'border-[#b03236] bg-[#fde5e5] text-[#c5222c]',
  green: 'border-[#2f8f2a] bg-[#e6f9e4] text-[#23932a]',
};

const Num = ({ value, up, box }) => (
  <td className="p-0 border-r border-b border-[#e6ecef]">
    <div className={`h-6 pr-[6px] flex items-center justify-end border ${box ? boxes[box] : up ? 'border-transparent text-[#c5222c]' : 'border-transparent text-[#23932a]'}`}>
      {value}
    </div>
  </td>
);

const QuoteTable = ({ rows, widths, emptyRows = 0, weight }) => (
  <table className="table-fixed border-separate border-spacing-0 w-[352px] text-sm leading-5 text-[#333f4b]">
    <colgroup>{widths.map((w, i) => <col key={i} className={w} />)}</colgroup>
    <thead>
      <tr className="h-[25px] text-xs text-[#55677a] [&>th]:font-normal [&>th]:p-0 [&>th]:pt-0.5 [&>th]:border-b [&>th]:border-r [&>th]:border-[#e6ecef] whitespace-nowrap">
        <th><div className="pl-2 text-left">代码</div></th>
        <th><div className="pl-2 text-left">名称</div></th>
        <th><div className="pr-2 text-right">最新价</div></th>
        <th>
          <div className="pr-2 flex items-center justify-end gap-1">涨跌幅<Chevron className="text-[#e8921a]" /></div>
        </th>
        {weight && <th><div className="pr-3 text-right">权重</div></th>}
      </tr>
    </thead>
    <tbody>
      {rows.map(r => (
        <tr key={r.code} className={`h-[25px] whitespace-nowrap ${r.active ? 'bg-[#cfe5ff]' : ''}`}>
          <td className="p-0 border-r border-b border-[#e6ecef]"><div className="ml-2 mr-[7px] pt-0.5 overflow-hidden">{r.code}</div></td>
          <td className="p-0 border-r border-b border-[#e6ecef]">
            <div className="relative ml-2 mr-[6px] pt-0.5">
              <div className={`overflow-hidden text-[13px] ${r.link ? 'text-[#386a9e]' : ''}`}>{r.name}</div>
              {r.eye && <span className="absolute right-[-3px] top-1"><Eye /></span>}
            </div>
          </td>
          <Num value={r.price} up={r.up} box={r.priceBox} />
          <Num value={r.pct} up={r.up} box={r.pctBox} />
          {weight && <td className="p-0 pr-2 border-b border-[#e6ecef] text-right">{r.weight}</td>}
        </tr>
      ))}
      {Array.from({ length: emptyRows }, (_, i) => (
        <tr key={i} className="h-[25px]">
          {widths.map((w, j) => <td key={j} className="p-0 border-r border-b border-[#e6ecef]" />)}
        </tr>
      ))}
    </tbody>
  </table>
);

const QuotePanel = () => (
  <aside className="w-[330px] shrink-0 overflow-hidden border-l border-[#dfe5e8]">
    <nav className="flex h-[22px] border-b border-[#dfe5e8] text-xs leading-[15px] text-[#4d5d6d]">
      <button className="w-[117px] h-[22px] pb-[5px] shrink-0 border-b-2 border-[#e8a23c] text-[#e8921a]">报价</button>
      <button className="w-[117px] pb-[5px] shrink-0">资讯</button>
      <button className="relative w-[117px] pb-[5px] shrink-0">
        评论
        <span className="absolute left-[76px] top-0.5 w-[5px] h-[5px] rounded-full bg-[#d8232a]" />
      </button>
    </nav>
    <section className="h-[159px] pl-2 pt-[10px] whitespace-nowrap">
      <h1 className="h-6 flex items-center gap-3 text-[17px] text-[#2f3d4c]">
        <b>USDindex</b>
        <span>美元指数</span>
      </h1>
      <div className="h-7 flex items-center text-[#1f9410]">
        <b className="font-['Liberation_Sans',sans-serif] text-[23px]">102.140</b>
        <svg viewBox="0 0 11 15" className="ml-1 w-[11px] h-[15px] shrink-0"><path d="M3.500 0h4v8H11l-5.500 7L0 8h3.500z" fill="currentColor" /></svg>
        <span className="ml-[5px] text-xs font-semibold">-0.020 -0.02%</span>
        <span className="ml-8 text-[11px] text-[#8495a6]">交易中 06/05 20:45(美东)</span>
      </div>
      <div className="h-[25px] pl-0.5 flex items-center gap-2">
        <button className="w-4 h-4 shrink-0 rounded-sm bg-[#6478d3] text-white flex items-center justify-center" aria-label="网站">
          <Icon className="w-3.5 h-3.5"><circle cx="8" cy="8" r="6" /><ellipse cx="8" cy="8" rx="2.800" ry="6" /><path d="M2 8h12M8 2v12" /></Icon>
        </button>
        <button className="w-4 h-4 shrink-0 rounded-sm border border-[#b8c6d2] text-[#5d83a5] flex items-center justify-center" aria-label="笔记">
          <Icon className="w-3.5 h-3.5"><path d="M3.500 13.500v-11h9v11l-3-2h-4z" strokeWidth="2" /><path d="M5.500 5.500h5m-5 3h5" strokeWidth="1.500" /></Icon>
        </button>
        <button className="w-4 h-4 shrink-0 rounded-sm bg-[#ee4864] text-white flex items-center justify-center" aria-label="收藏">
          <Icon className="w-3.5 h-3.5"><path d="M8 14C3 10 1.500 8 1.500 5.500 1.500 2.500 6 1.500 8 4.500c2-3 6.500-2 6.500 1C14.500 8 13 10 8 14z" fill="white" stroke="none" /></Icon>
        </button>
        <button className="ml-[177px] w-[18px] h-[18px] shrink-0 border border-[#c5cfd8] text-[#4f7599] flex items-center justify-center" aria-label="提醒">
          <Icon className="w-3.5 h-3.5"><path d="M8 1.500c3 0 4.500 2 4.500 5V10l1.500 2H2l1.500-2V6.500c0-3 1.500-5 4.500-5zM6 13h4l-2 2z" fill="currentColor" stroke="none" /></Icon>
        </button>
        <button className="w-16 h-[18px] shrink-0 border border-[#dfe5e8] text-xs leading-4 text-[#adb7c1]">快捷交易</button>
      </div>
      <div className="pt-[6px] text-xs leading-[18px] text-[#4d5d6d]">
        <div className="flex">
          <Stat label="最高价" value="102.140" />
          <Stat label="开盘价" value="102.120" />
          <Stat label="买入价" value="102.130" />
        </div>
        <div className="flex">
          <Stat label="最低价" value="102.050" />
          <Stat label="昨收价" value="102.160" dark />
          <Stat label="卖出价" value="102.150" />
        </div>
        <Stat label="振　幅" value="0.09%" dark />
      </div>
      <button className="ml-[161px] flex" aria-label="收起">
        <svg viewBox="0 0 10 6" className="w-[10px] h-1.5" fill="none" stroke="#7a8ea3" strokeWidth="1.300"><path d="m1 5.300 4-4 4 4" /></svg>
      </button>
    </section>
    <h2 className="h-[30px] pl-[6px] border-t-2 border-b border-t-[#dde2e5] border-b-[#e0e6e9] text-xs leading-[29px] text-[#2f3d4c]">成分汇率</h2>
    <QuoteTable rows={components} widths={['w-[71px]', 'w-[84px]', 'w-[66px]', 'w-[66px]', 'w-[65px]']} weight />
    <h2 className="h-[29px] pl-[6px] border-b border-[#e0e6e9] text-xs leading-[29px] text-[#2f3d4c]">重要汇率</h2>
    <QuoteTable rows={majors} widths={['w-[70px]', 'w-[110px]', 'w-[89px]', 'w-[68px]', 'w-[15px]']} emptyRows={6} />
  </aside>
);

export default function App() {
  return (
    <div className="h-screen flex overflow-hidden bg-white font-['Open_Sans','Noto_Sans_CJK_SC',sans-serif]">
      <main className="flex-1 min-w-0 overflow-hidden">
        <TopBar />
        <DrawBar />
        <IndicatorRow name="MA" items={maItems} nameWidth="w-[32px] mr-[11px]">
          <button className="ml-auto mr-[11px] text-xs text-[#2d87cf]">前复权</button>
          <div className="pr-1 flex items-center gap-1">
            <button aria-label="撤销"><Icon><path d="M2 2.500h7.500a5.500 5.500 0 0 1 0 11H3M2 2.500 5.500 6" /></Icon></button>
            <button aria-label="缩小"><Icon className="w-[15px] h-[15px]"><circle cx="8" cy="8" r="6.500" /><path d="M5 8h6" /></Icon></button>
            <button aria-label="放大"><Icon className="w-[15px] h-[15px]"><circle cx="8" cy="8" r="6.500" /><path d="M5 8h6M8 5v6" /></Icon></button>
          </div>
        </IndicatorRow>
        <PriceChart />
        <IndicatorRow name="MACD" items={macdItems} nameWidth="w-[50px] mr-[10px]" />
        <MacdChart />
        <div className={`h-[19px] pt-px pl-[147px] pr-[58px] flex items-center ${axisFont}`}>
          {months.map(([m, w]) => <span key={m} className="basis-0 min-w-0" style={{ flexGrow: w }}>{m}</span>)}
        </div>
        <Overview />
        <BottomTabs />
      </main>
      <QuotePanel />
    </div>
  );
}
